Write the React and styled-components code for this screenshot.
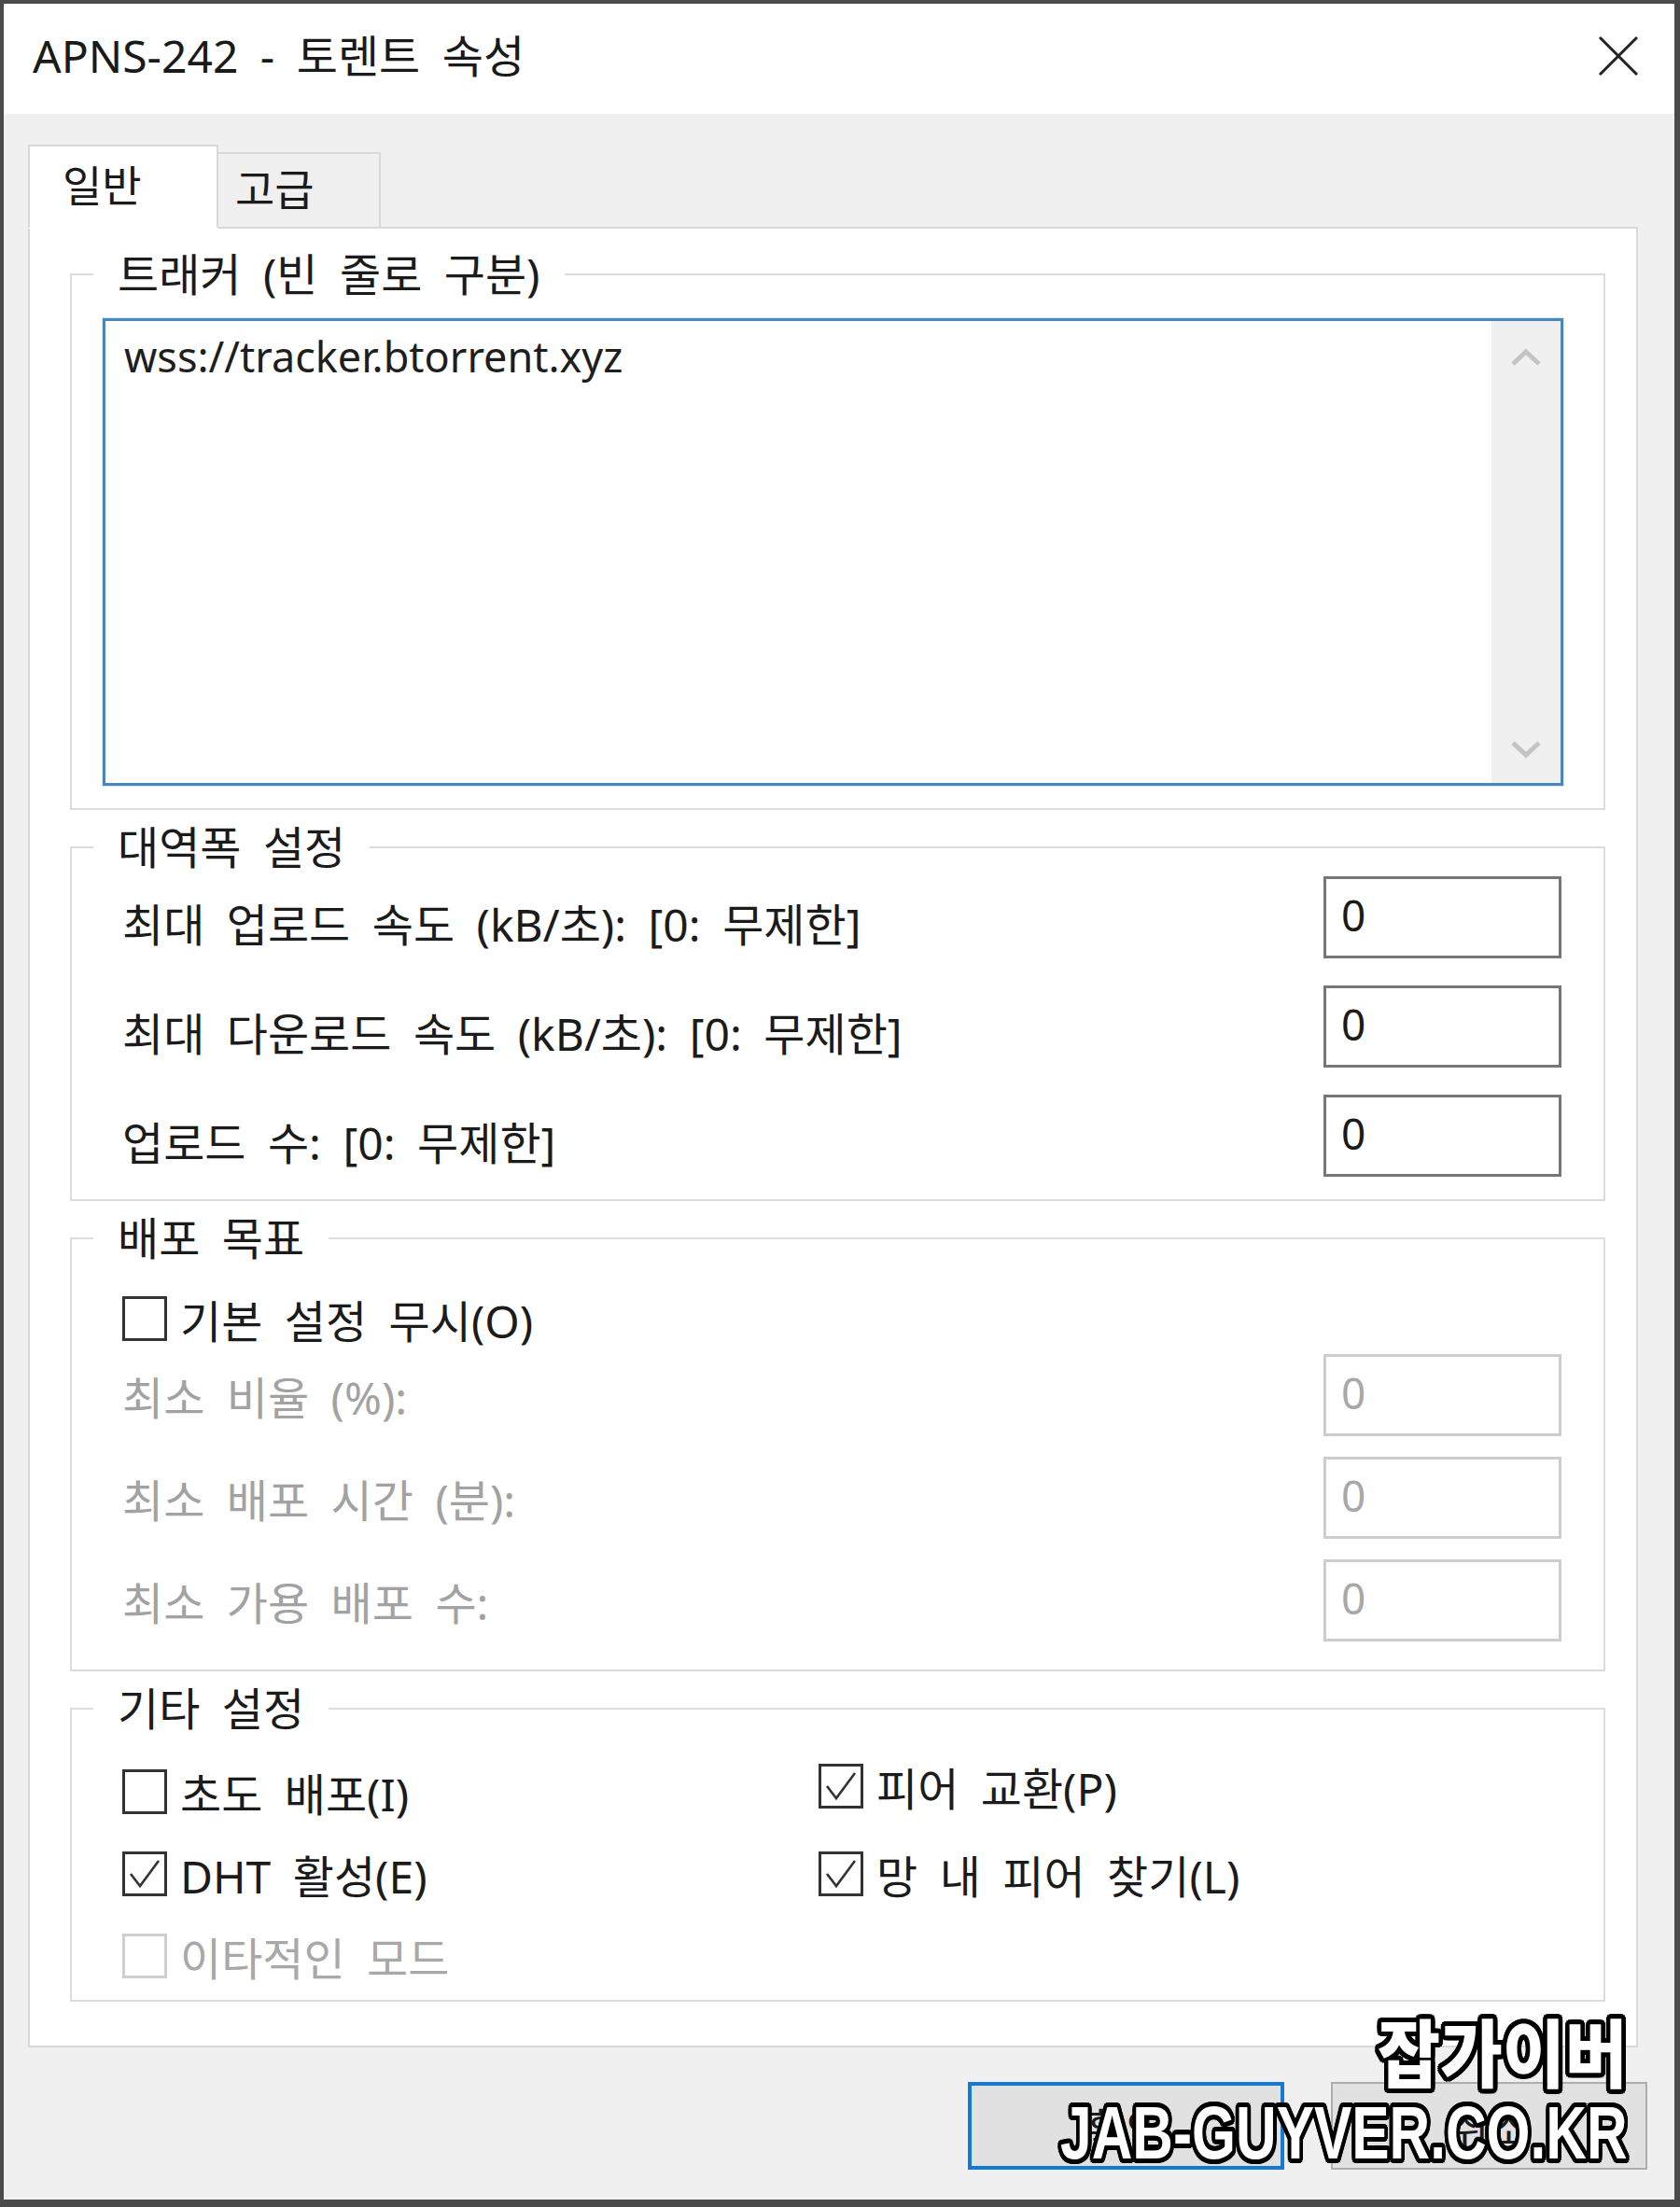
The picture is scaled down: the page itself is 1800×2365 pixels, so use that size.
import React from "react";
import styled, { createGlobalStyle } from "styled-components";

const GlobalStyle = createGlobalStyle`
  html, body {
    margin: 0;
    padding: 0;
    background: #ffffff;
  }
  body {
    font-family: "Noto Sans", "Noto Sans CJK KR", sans-serif;
    color: #1b1b1b;
    word-spacing: 11px;
  }
  * {
    box-sizing: border-box;
  }
`;

const Window = styled.div`
  position: relative;
  width: 1800px;
  height: 2365px;
  display: flex;
  flex-direction: column;
  background: #f0f0f0;
  border-style: solid;
  border-color: #4b4b4b;
  border-width: 4px 6px 8px 4px;
  overflow: hidden;
`;

const TitleBar = styled.div`
  flex: none;
  height: 118px;
  background: #ffffff;
  display: flex;
  align-items: center;
  justify-content: space-between;
  padding: 0 37px 12px 31px;
`;

const Title = styled.span`
  font-size: 48px;
  color: #1a1a1a;
  white-space: nowrap;
`;

const CloseButton = styled.div`
  width: 46px;
  height: 46px;
  display: flex;
  margin-top: 6px;
`;

const Body = styled.div`
  flex: 1;
  display: flex;
  flex-direction: column;
  padding: 33px 39px 0 26px;
`;

const TabStrip = styled.div`
  position: relative;
  z-index: 1;
  display: flex;
  align-items: flex-end;
  margin-bottom: -2px;
`;

const Tab = styled.div`
  width: ${(p) => (p.$active ? "204px" : "174px")};
  height: ${(p) => (p.$active ? "90px" : "82px")};
  padding-left: ${(p) => (p.$active ? "35px" : "18px")};
  padding-bottom: 8px;
  background: ${(p) => (p.$active ? "#ffffff" : "#f0f0f0")};
  border: 2px solid #d9d9d9;
  border-bottom-color: ${(p) => (p.$active ? "#ffffff" : "#d9d9d9")};
  border-left-width: ${(p) => (p.$active ? "2px" : "0")};
  display: flex;
  align-items: center;
  font-size: 46px;
  color: #1b1b1b;
`;

const Panel = styled.div`
  background: #ffffff;
  border: 2px solid #d9d9d9;
  padding: 19px 33px 47px 43px;
  display: flex;
  flex-direction: column;
  gap: 10px;
`;

const Group = styled.fieldset`
  margin: 0;
  padding: 0;
  min-width: 0;
  border: 2px solid #dcdcdc;
`;

const GroupTitle = styled.legend`
  margin-left: 23px;
  padding: 0 26px;
  font-size: 48px;
  line-height: 60px;
  color: #1b1b1b;
`;

const GroupBody = styled.div`
  padding: ${(p) => p.$pad};
  display: flex;
  flex-direction: column;
  gap: ${(p) => p.$gap || "0px"};
`;

const TrackerBox = styled.div`
  height: 501px;
  display: flex;
  background: #ffffff;
  border: 3px solid #4a86c2;
  box-shadow: 0 0 0 1px #d6ebfa;
`;

const TrackerText = styled.div`
  flex: 1;
  padding: 8px 20px;
  font-size: 45px;
  line-height: 60px;
  color: #1e1e1e;
`;

const ScrollTrack = styled.div`
  width: 74px;
  background: #f0f0f0;
  display: flex;
  flex-direction: column;
  align-items: center;
  justify-content: space-between;
  padding: 29px 0 26px;
`;

const FieldRow = styled.div`
  height: 88px;
  display: flex;
  align-items: center;
  justify-content: space-between;
`;

const FieldLabel = styled.span`
  font-size: 48px;
  line-height: 60px;
  padding-top: ${(p) => (p.$disabled ? "6px" : "16px")};
  white-space: nowrap;
  color: ${(p) => (p.$disabled ? "#a2a2a2" : "#1b1b1b")};
`;

const NumberBox = styled.div`
  width: 255px;
  height: 88px;
  background: #ffffff;
  border: 3px solid ${(p) => (p.$disabled ? "#cdcdcd" : "#767676")};
  padding: 8px 16px;
  font-size: 46px;
  line-height: 60px;
  color: ${(p) => (p.$disabled ? "#a8a8a8" : "#1b1b1b")};
`;

const CheckRow = styled.label`
  height: 60px;
  display: flex;
  align-items: center;
  gap: 14px;
  margin: ${(p) => p.$margin || "0"};
  font-size: 48px;
  white-space: nowrap;
  color: ${(p) => (p.$disabled ? "#a8a8a8" : "#1b1b1b")};
`;

const Box = styled.span`
  flex: none;
  width: 48px;
  height: 48px;
  background: #ffffff;
  border: 3px solid ${(p) => (p.$disabled ? "#cfcfcf" : "#333333")};
  display: flex;
  align-items: center;
  justify-content: center;
`;

const CheckGrid = styled.div`
  display: grid;
  grid-template-columns: 746px 1fr;
  row-gap: 28px;
`;

const ButtonRow = styled.div`
  display: flex;
  justify-content: flex-end;
  gap: 50px;
  margin: 37px -10px 0 0;
`;

const Button = styled.div`
  width: 339px;
  height: 94px;
  background: #e1e1e1;
  border: ${(p) => (p.$primary ? "4px solid #1479d2" : "2px solid #adadad")};
  display: flex;
  align-items: center;
  justify-content: center;
  font-size: 46px;
  color: #1b1b1b;
`;

const outline = [
  "-5px 0 0 #000",
  "5px 0 0 #000",
  "0 -5px 0 #000",
  "0 5px 0 #000",
  "-4px -4px 0 #000",
  "4px -4px 0 #000",
  "-4px 4px 0 #000",
  "4px 4px 0 #000",
  "-2px -5px 0 #000",
  "2px -5px 0 #000",
  "-2px 5px 0 #000",
  "2px 5px 0 #000",
  "-5px -2px 0 #000",
  "5px -2px 0 #000",
  "-5px 2px 0 #000",
  "5px 2px 0 #000",
].join(", ");

const Watermark = styled.div`
  position: absolute;
  right: 50px;
  bottom: 36px;
  display: flex;
  flex-direction: column;
  align-items: flex-end;
  pointer-events: none;
`;

const WaterKo = styled.div`
  font-family: "Noto Sans CJK KR", sans-serif;
  font-weight: 900;
  font-size: 79px;
  line-height: 79px;
  margin-bottom: 15px;
  color: #ffffff;
  text-shadow: ${outline};
  transform: scaleX(0.92);
  transform-origin: right center;
  white-space: nowrap;
`;

const WaterEn = styled.div`
  font-family: "Liberation Sans", sans-serif;
  font-weight: 700;
  font-size: 80px;
  line-height: 70px;
  color: #ffffff;
  text-shadow: ${outline};
  transform: scaleX(0.755);
  transform-origin: right center;
  white-space: nowrap;
`;

const CheckMark = () => (
  <svg width="38" height="38" viewBox="0 0 38 38">
    <polyline points="4,19 14,32 34,5" fill="none" stroke="#333" strokeWidth="2.6" />
  </svg>
);

const Chevron = ({ up }) => (
  <svg width="34" height="20" viewBox="0 0 34 20">
    <polyline
      points={up ? "3,17 17,4 31,17" : "3,3 17,16 31,3"}
      fill="none"
      stroke="#c4c4c4"
      strokeWidth="5"
    />
  </svg>
);

const Check = ({ checked, disabled, children, margin }) => (
  <CheckRow $disabled={disabled} $margin={margin}>
    <Box $disabled={disabled}>{checked && <CheckMark />}</Box>
    {children}
  </CheckRow>
);

const bandwidth = [
  "최대 업로드 속도 (kB/초): [0: 무제한]",
  "최대 다운로드 속도 (kB/초): [0: 무제한]",
  "업로드 수: [0: 무제한]",
];

const seeding = ["최소 비율 (%):", "최소 배포 시간 (분):", "최소 가용 배포 수:"];

export default function App() {
  return (
    <>
      <GlobalStyle />
      <Window>
        <TitleBar>
          <Title>APNS-242 - 토렌트 속성</Title>
          <CloseButton>
            <svg width="46" height="46" viewBox="0 0 46 46">
              <path d="M3 3 L43 43 M43 3 L3 43" stroke="#222" strokeWidth="3" />
            </svg>
          </CloseButton>
        </TitleBar>

        <Body>
          <TabStrip>
            <Tab $active>일반</Tab>
            <Tab>고급</Tab>
          </TabStrip>

          <Panel>
            <Group>
              <GroupTitle>트래커 (빈 줄로 구분)</GroupTitle>
              <GroupBody $pad="17px 43px 24px 33px">
                <TrackerBox>
                  <TrackerText>wss://tracker.btorrent.xyz</TrackerText>
                  <ScrollTrack>
                    <Chevron up />
                    <Chevron />
                  </ScrollTrack>
                </TrackerBox>
              </GroupBody>
            </Group>

            <Group>
              <GroupTitle>대역폭 설정</GroupTitle>
              <GroupBody $pad="1px 45px 24px 54px" $gap="29px">
                {bandwidth.map((label) => (
                  <FieldRow key={label}>
                    <FieldLabel>{label}</FieldLabel>
                    <NumberBox>0</NumberBox>
                  </FieldRow>
                ))}
              </GroupBody>
            </Group>

            <Group>
              <GroupTitle>배포 목표</GroupTitle>
              <GroupBody $pad="0 45px 30px 54px" $gap="22px">
                <Check margin="26px 0 -14px">기본 설정 무시(O)</Check>
                {seeding.map((label) => (
                  <FieldRow key={label}>
                    <FieldLabel $disabled>{label}</FieldLabel>
                    <NumberBox $disabled>0</NumberBox>
                  </FieldRow>
                ))}
              </GroupBody>
            </Group>

            <Group>
              <GroupTitle>기타 설정</GroupTitle>
              <GroupBody $pad="29px 45px 17px 54px">
                <CheckGrid>
                  <Check>초도 배포(I)</Check>
                  <Check checked margin="-6px 0 0">피어 교환(P)</Check>
                  <Check checked>DHT 활성(E)</Check>
                  <Check checked>망 내 피어 찾기(L)</Check>
                  <Check disabled>이타적인 모드</Check>
                </CheckGrid>
              </GroupBody>
            </Group>
          </Panel>

          <ButtonRow>
            <Button $primary>확인</Button>
            <Button>취소</Button>
          </ButtonRow>
        </Body>

        <Watermark>
          <WaterKo>잡가이버</WaterKo>
          <WaterEn>JAB-GUYVER.CO.KR</WaterEn>
        </Watermark>
      </Window>
    </>
  );
}
